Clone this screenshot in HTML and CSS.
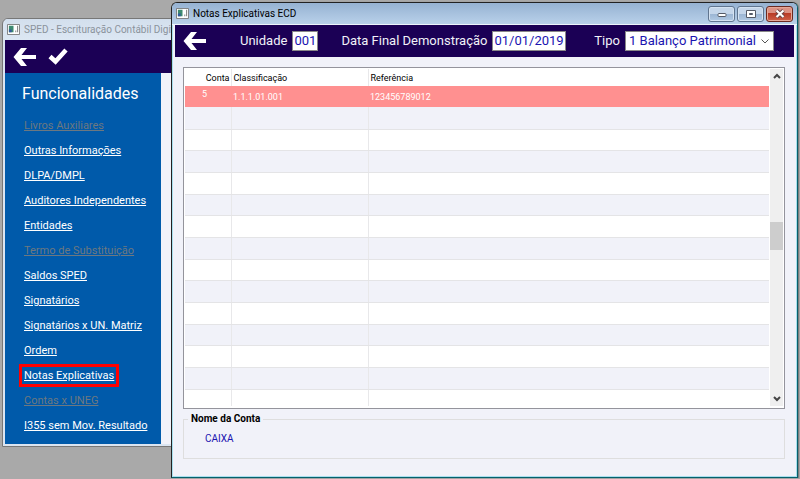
FILE: index.html
```
<!DOCTYPE html>

<html lang="pt-BR">

	<head>

		<meta charset="utf-8">
		<meta name="viewport" content="width=device-width, initial-scale=1">

		<title>Notas Explicativas ECD</title>

		<link rel="stylesheet" href="styles.css">

	</head>

	<body>

		<div class="desktop">

			<section class="window back">

				<header class="titlebar">
					<svg class="appicon" viewBox="0 0 14 12"><path fill="#fff" stroke="#777" d="M.5.5h13v11H.5z"/><path fill="#3d8a70" d="M2 2h5v7H2z"/><path fill="#345a9a" d="M2 6h3v3H2z"/><path fill="#777" d="M9 7h1v2H9zM11 2h1v7h-1z"/></svg>
					<h1>SPED - Escrituração Contábil Digital</h1>
				</header>

				<div class="toolbar">
					<button type="button" class="iconbtn" aria-label="Voltar">
						<svg viewBox="0 0 24 20"><path fill="#fff" d="M8 1h6L8.500 8H23v4H8.500l5.500 7H8L.5 10z"/></svg>
					</button>
					<button type="button" class="iconbtn check" aria-label="Confirmar">
						<svg viewBox="0 0 20 17"><path fill="none" stroke="#fff" stroke-width="4.500" d="M2 8.500l5.500 5L18 2"/></svg>
					</button>
				</div>

				<nav class="menu">
					<h2>Funcionalidades</h2>
					<ul>
						<li><a href="#" class="off">Livros Auxiliares</a></li>
						<li><a href="#">Outras Informações</a></li>
						<li><a href="#">DLPA/DMPL</a></li>
						<li><a href="#">Auditores Independentes</a></li>
						<li><a href="#">Entidades</a></li>
						<li><a href="#" class="off">Termo de Substituição</a></li>
						<li><a href="#">Saldos SPED</a></li>
						<li><a href="#">Signatários</a></li>
						<li><a href="#">Signatários x UN. Matriz</a></li>
						<li><a href="#">Ordem</a></li>
						<li><a href="#" class="marked">Notas Explicativas</a></li>
						<li><a href="#" class="off">Contas x UNEG</a></li>
						<li><a href="#">I355 sem Mov. Resultado</a></li>
					</ul>
				</nav>

			</section>

			<section class="window front">

				<header class="titlebar">
					<svg class="appicon" viewBox="0 0 14 12"><path fill="#fff" stroke="#777" d="M.5.5h13v11H.5z"/><path fill="#3d8a70" d="M2 2h5v7H2z"/><path fill="#345a9a" d="M2 6h3v3H2z"/><path fill="#777" d="M9 7h1v2H9zM11 2h1v7h-1z"/></svg>
					<h1>Notas Explicativas ECD</h1>
					<div class="winbtns">
						<button type="button" aria-label="Minimizar"><svg viewBox="0 0 12 12"><rect x="2" y="5.500" width="8" height="3" rx="1" fill="#fff" stroke="#555a66"/></svg></button>
						<button type="button" aria-label="Maximizar"><svg viewBox="0 0 12 12"><path fill="#fff" stroke="#555a66" fill-rule="evenodd" d="M1.500 2.500h9v7h-9zM4.500 5.500v1h3v-1z"/></svg></button>
						<button type="button" class="close" aria-label="Fechar"><svg viewBox="0 0 12 12"><path fill="none" stroke="#6b4444" stroke-width="4" d="M2.500 2.500l7 6.500M9.500 2.500l-7 6.500"/><path fill="none" stroke="#fff" stroke-width="2.200" d="M2.500 2.500l7 6.500M9.500 2.500l-7 6.500"/></svg></button>
					</div>
				</header>

				<form class="toolbar">
					<button type="button" class="iconbtn" aria-label="Voltar">
						<svg viewBox="0 0 24 20"><path fill="#fff" d="M8 1h6L8.500 8H23v4H8.500l5.500 7H8L.5 10z"/></svg>
					</button>
					<div class="field unit">
						<label for="unidade">Unidade</label>
						<input type="text" id="unidade" value="001" maxlength="3">
					</div>
					<div class="field date">
						<label for="data">Data Final Demonstração</label>
						<input type="text" id="data" value="01/01/2019" maxlength="10">
					</div>
					<div class="field type">
						<label for="tipo">Tipo</label>
						<span class="combo">
							<select id="tipo">
								<option>1 Balanço Patrimonial</option>
							</select>
							<svg viewBox="0 0 8 5"><path fill="none" stroke="#555" d="M.5.5L4 4 7.500.5"/></svg>
						</span>
					</div>
				</form>

				<main class="content">

					<div class="grid">
						<table>
							<colgroup><col class="c1"><col class="c2"><col></colgroup>
							<thead>
								<tr><th class="right">Conta</th><th>Classificação</th><th>Referência</th></tr>
							</thead>
							<tbody>
								<tr class="selected"><td class="num">5</td><td>1.1.1.01.001</td><td>123456789012</td></tr>
								<tr><td></td><td></td><td></td></tr>
								<tr><td></td><td></td><td></td></tr>
								<tr><td></td><td></td><td></td></tr>
								<tr><td></td><td></td><td></td></tr>
								<tr><td></td><td></td><td></td></tr>
								<tr><td></td><td></td><td></td></tr>
								<tr><td></td><td></td><td></td></tr>
								<tr><td></td><td></td><td></td></tr>
								<tr><td></td><td></td><td></td></tr>
								<tr><td></td><td></td><td></td></tr>
								<tr><td></td><td></td><td></td></tr>
								<tr><td></td><td></td><td></td></tr>
								<tr><td></td><td></td><td></td></tr>
								<tr class="cut"><td></td><td></td><td></td></tr>
							</tbody>
						</table>
						<div class="scroll">
							<svg viewBox="0 0 8 6"><path fill="none" stroke="#444" stroke-width="2" d="M1 5l3-3 3 3"/></svg>
							<div class="track"><div class="thumb"></div></div>
							<svg viewBox="0 0 8 6"><path fill="none" stroke="#444" stroke-width="2" d="M1 1l3 3 3-3"/></svg>
						</div>
					</div>

					<fieldset>
						<legend>Nome da Conta</legend>
						<p>CAIXA</p>
					</fieldset>

				</main>

			</section>

		</div>

	</body>

</html>
```
FILE: styles.css
```
* {margin:0; padding:0; box-sizing:border-box;}
body {font:11px/16px Roboto,tahoma,sans-serif; background:#a9a9a9; color:#000;}
button, input, select {font:inherit; border:0;}
.desktop {position:relative; min-height:100vh; padding:2px 2px 1px 171px;}

.window {border:1px solid #444; border-radius:6px 6px 0 0; background:#f1f2f9; overflow:hidden;}
.back {position:absolute; left:2px; top:18px; width:220px; padding:0 2px 2px; background:#dbe5f1; border-color:#777;}
.front {position:relative; padding:0 3px 2px; border-color:#222 #06606c #06606c #222; box-shadow:inset 0 0 0 1px #a8e0ee, 1px 0 1px #777;}

.titlebar {display:flex; align-items:center; gap:4px; height:21px; padding-left:2px; background:linear-gradient(#d3dfed,#dce7f3);}
.titlebar h1 {flex:1; font-size:10px; font-weight:normal; white-space:nowrap; overflow:hidden;}
.back h1 {color:#8b939c;}
.front .titlebar {height:22px; margin:0 -3px; padding:0 4px; background:linear-gradient(#96b2d2,#b9d1ea); border-bottom:1px solid #eef5fc;}
.appicon {width:13px; height:11px;}

.winbtns {display:flex; gap:2px;}
.winbtns button {display:flex; align-items:center; justify-content:center; width:27px; height:16px; border:1px solid #60758f; border-radius:3px; background:linear-gradient(#c5d6ea 50%,#9bb5d3 50%,#b2cae4); box-shadow:inset 0 0 0 1px #d5e3f2;}
.winbtns .close {border-color:#6b2a20; background:linear-gradient(#dc9284 45%,#b83a25 45%,#cf6048); box-shadow:inset 0 0 0 1px #e5a898;}
.winbtns svg {width:12px; height:12px;}

.toolbar {display:flex; align-items:center; height:33px; padding:0 8px; background:#1b0055; color:#f1f2f9;}
.front .toolbar {height:32px;}
.iconbtn {display:flex; background:none;}
.iconbtn svg {width:24px; height:20px;}
.check {margin-left:11px;}
.check svg {width:20px; height:17px;}
.field {display:flex; align-items:center; gap:5px; font-size:13px; line-height:20px; white-space:nowrap;}
.field input {height:20px; padding:0 1px; border:1px solid #888; background:#fff; color:#1a14b0;}
.unit {margin-left:33px;}
.unit input {width:26px;}
.date {margin-left:23px;}
.date input {width:74px;}
.type {margin-left:auto; margin-right:12px;}
.combo {display:flex; align-items:center; width:149px; height:20px; padding-right:4px; border:1px solid #888; background:#fff;}
.combo select {flex:1; min-width:0; height:18px; padding-left:3px; line-height:18px; appearance:none; background:none; color:#1a14b0;}
.combo svg {width:8px; height:5px;}

.menu {width:156px; height:371px; padding:12px 0 0 17px; background:#005aaa; color:#fff;}
.back .menu {box-shadow:60px 0 0 #f1f2f9;}
.menu h2 {font-size:16px; line-height:18px; font-weight:normal;}
.menu ul {margin-top:10px; list-style:none;}
.menu li {height:25px; padding-left:2px; line-height:25px; white-space:nowrap;}
.menu a {color:#fff;}
.menu .off {color:#6d7880;}
.menu .marked {outline:3px solid #f00; outline-offset:2px;}

.content {padding:10px 9px 16px 8px; background:#f1f2f9;}
.grid {display:flex; padding:1px 1px 2px; border:1px solid #94949c; background:#fff;}
table {flex:1; table-layout:fixed; border-collapse:collapse; font-size:9px; line-height:14px;}
.c1 {width:46px;}
.c2 {width:137px;}
th {height:17px; padding:1px 2px 0; text-align:left; font-weight:normal;}
td {height:22px; padding:0 2px; border-bottom:1px solid #e4e4e6;}
th + th, td + td {border-left:1px solid #e8e8ea;}
th.right {text-align:right; padding-right:1px;}
tbody tr:nth-child(3n) td {height:21px;}
tbody tr:nth-child(even) {background:#f1f2f9;}
tbody .selected td {height:21px; border:0; background:#ff9090; color:#fff;}
.selected .num {padding-right:24px; padding-bottom:6px; text-align:right;}
tbody tr.cut:last-child td {height:17px; border-bottom:0;}
.scroll {display:flex; flex-direction:column; align-items:center; width:13px; margin-left:1px; padding:4px 0; background:#efefef;}
.scroll svg {width:8px; height:6px;}
.track {flex:1; width:100%; padding-top:143px;}
.thumb {height:28px; background:#cdcdcd;}

fieldset {margin-top:2px; padding:4px 21px 11px; border:1px solid #dedede;}
legend {margin-left:-17px; padding:0 3px; font-size:10px; font-weight:bold;}
fieldset p {font-size:10px; color:#1a14b0;}
```
